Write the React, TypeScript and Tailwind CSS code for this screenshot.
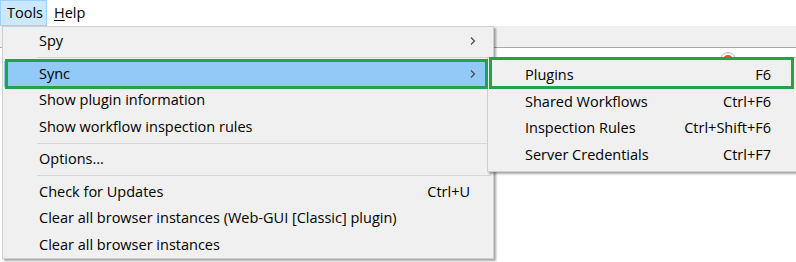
import React from "react";

type Item = { label: string; shortcut?: string; sub?: boolean; active?: boolean } | "sep";

const mainItems: Item[] = [
  { label: "Spy", sub: true },
  "sep",
  { label: "Sync", sub: true, active: true },
  { label: "Show plugin information" },
  { label: "Show workflow inspection rules" },
  "sep",
  { label: "Options..." },
  "sep",
  { label: "Check for Updates", shortcut: "Ctrl+U" },
  { label: "Clear all browser instances (Web-GUI [Classic] plugin)" },
  { label: "Clear all browser instances" },
];

const syncItems = [
  { label: "Plugins", shortcut: "F6" },
  { label: "Shared Workflows", shortcut: "Ctrl+F6" },
  { label: "Inspection Rules", shortcut: "Ctrl+Shift+F6" },
  { label: "Server Credentials", shortcut: "Ctrl+F7" },
];

const Chevron = () => (
  <svg width="8" height="12" viewBox="0 0 8 12" className="text-[#444]">
    <path d="M2 2.5 L5.5 6 L2 9.5" fill="none" stroke="currentColor" strokeWidth="1.1" />
  </svg>
);

export default function App() {
  return (
    <div
      className="relative w-[796px] h-[262px] bg-white overflow-hidden text-[#000] text-[14.5px]"
      style={{ fontFamily: '"Open Sans", "Noto Sans", sans-serif' }}
    >
      {/* menu bar */}
      <div className="flex h-[26px] items-stretch">
        <div className="flex items-center px-[6px] bg-[#cce8ff] border border-[#99d1ff] w-[47px]">Tools</div>
        <div className="flex items-center pl-[7px]">
          <span className="underline underline-offset-2 decoration-1">H</span>elp
        </div>
      </div>

      {/* window behind the menus */}
      <div className="h-[22px] bg-[#f0f0f0] border-b border-[#a8a8a8]" />
      <div className="relative h-[214px]">
        <div className="absolute left-[720px] top-[4px] w-[16px] h-[16px] rounded-full border border-[#bbb] bg-white flex items-center justify-center">
          <div className="w-[10px] h-[10px] rounded-full bg-[#e8581c]" />
        </div>
      </div>

      {/* Tools dropdown */}
      <div className="absolute left-[2px] top-[26px] w-[492px] bg-[#f0f0f0] border border-[#cfcfcf] shadow-[2px_2px_2px_rgba(0,0,0,0.35)] pt-[1px] pb-0 pl-[1px] pr-[2px]">
        {mainItems.map((it, i) =>
          it === "sep" ? (
            <div key={i} className="h-[6px] flex items-center pl-[33px]">
              <div className="h-px w-full bg-[#d5d5d5]" />
            </div>
          ) : (
            <div
              key={i}
              className={`h-[26.5px] flex items-center pl-[35px] pr-[14px] ${it.active ? "bg-[#91c9f7]" : ""}`}
            >
              <span className="flex-1 whitespace-nowrap">{it.label}</span>
              {it.shortcut && <span className="mr-[7px]">{it.shortcut}</span>}
              {it.sub && <Chevron />}
            </div>
          )
        )}
      </div>

      {/* Sync submenu */}
      <div className="absolute left-[487px] top-[57px] w-[312px] bg-[#f0f0f0] border border-[#cfcfcf] shadow-[2px_2px_2px_rgba(0,0,0,0.35)] pt-[4px] pb-[3px]">
        {syncItems.map((it) => (
          <div key={it.label} className="h-[26.5px] flex items-center pl-[37px] pr-[27px]">
            <span className="flex-1 whitespace-nowrap">{it.label}</span>
            <span>{it.shortcut}</span>
          </div>
        ))}
      </div>

      {/* annotation boxes */}
      <div className="absolute left-[5px] top-[59px] w-[483px] h-[30px] border-[3px] border-[#22a34a]" />
      <div className="absolute left-[489px] top-[57px] w-[305px] h-[32px] border-[3px] border-[#22a34a]" />
    </div>
  );
}
